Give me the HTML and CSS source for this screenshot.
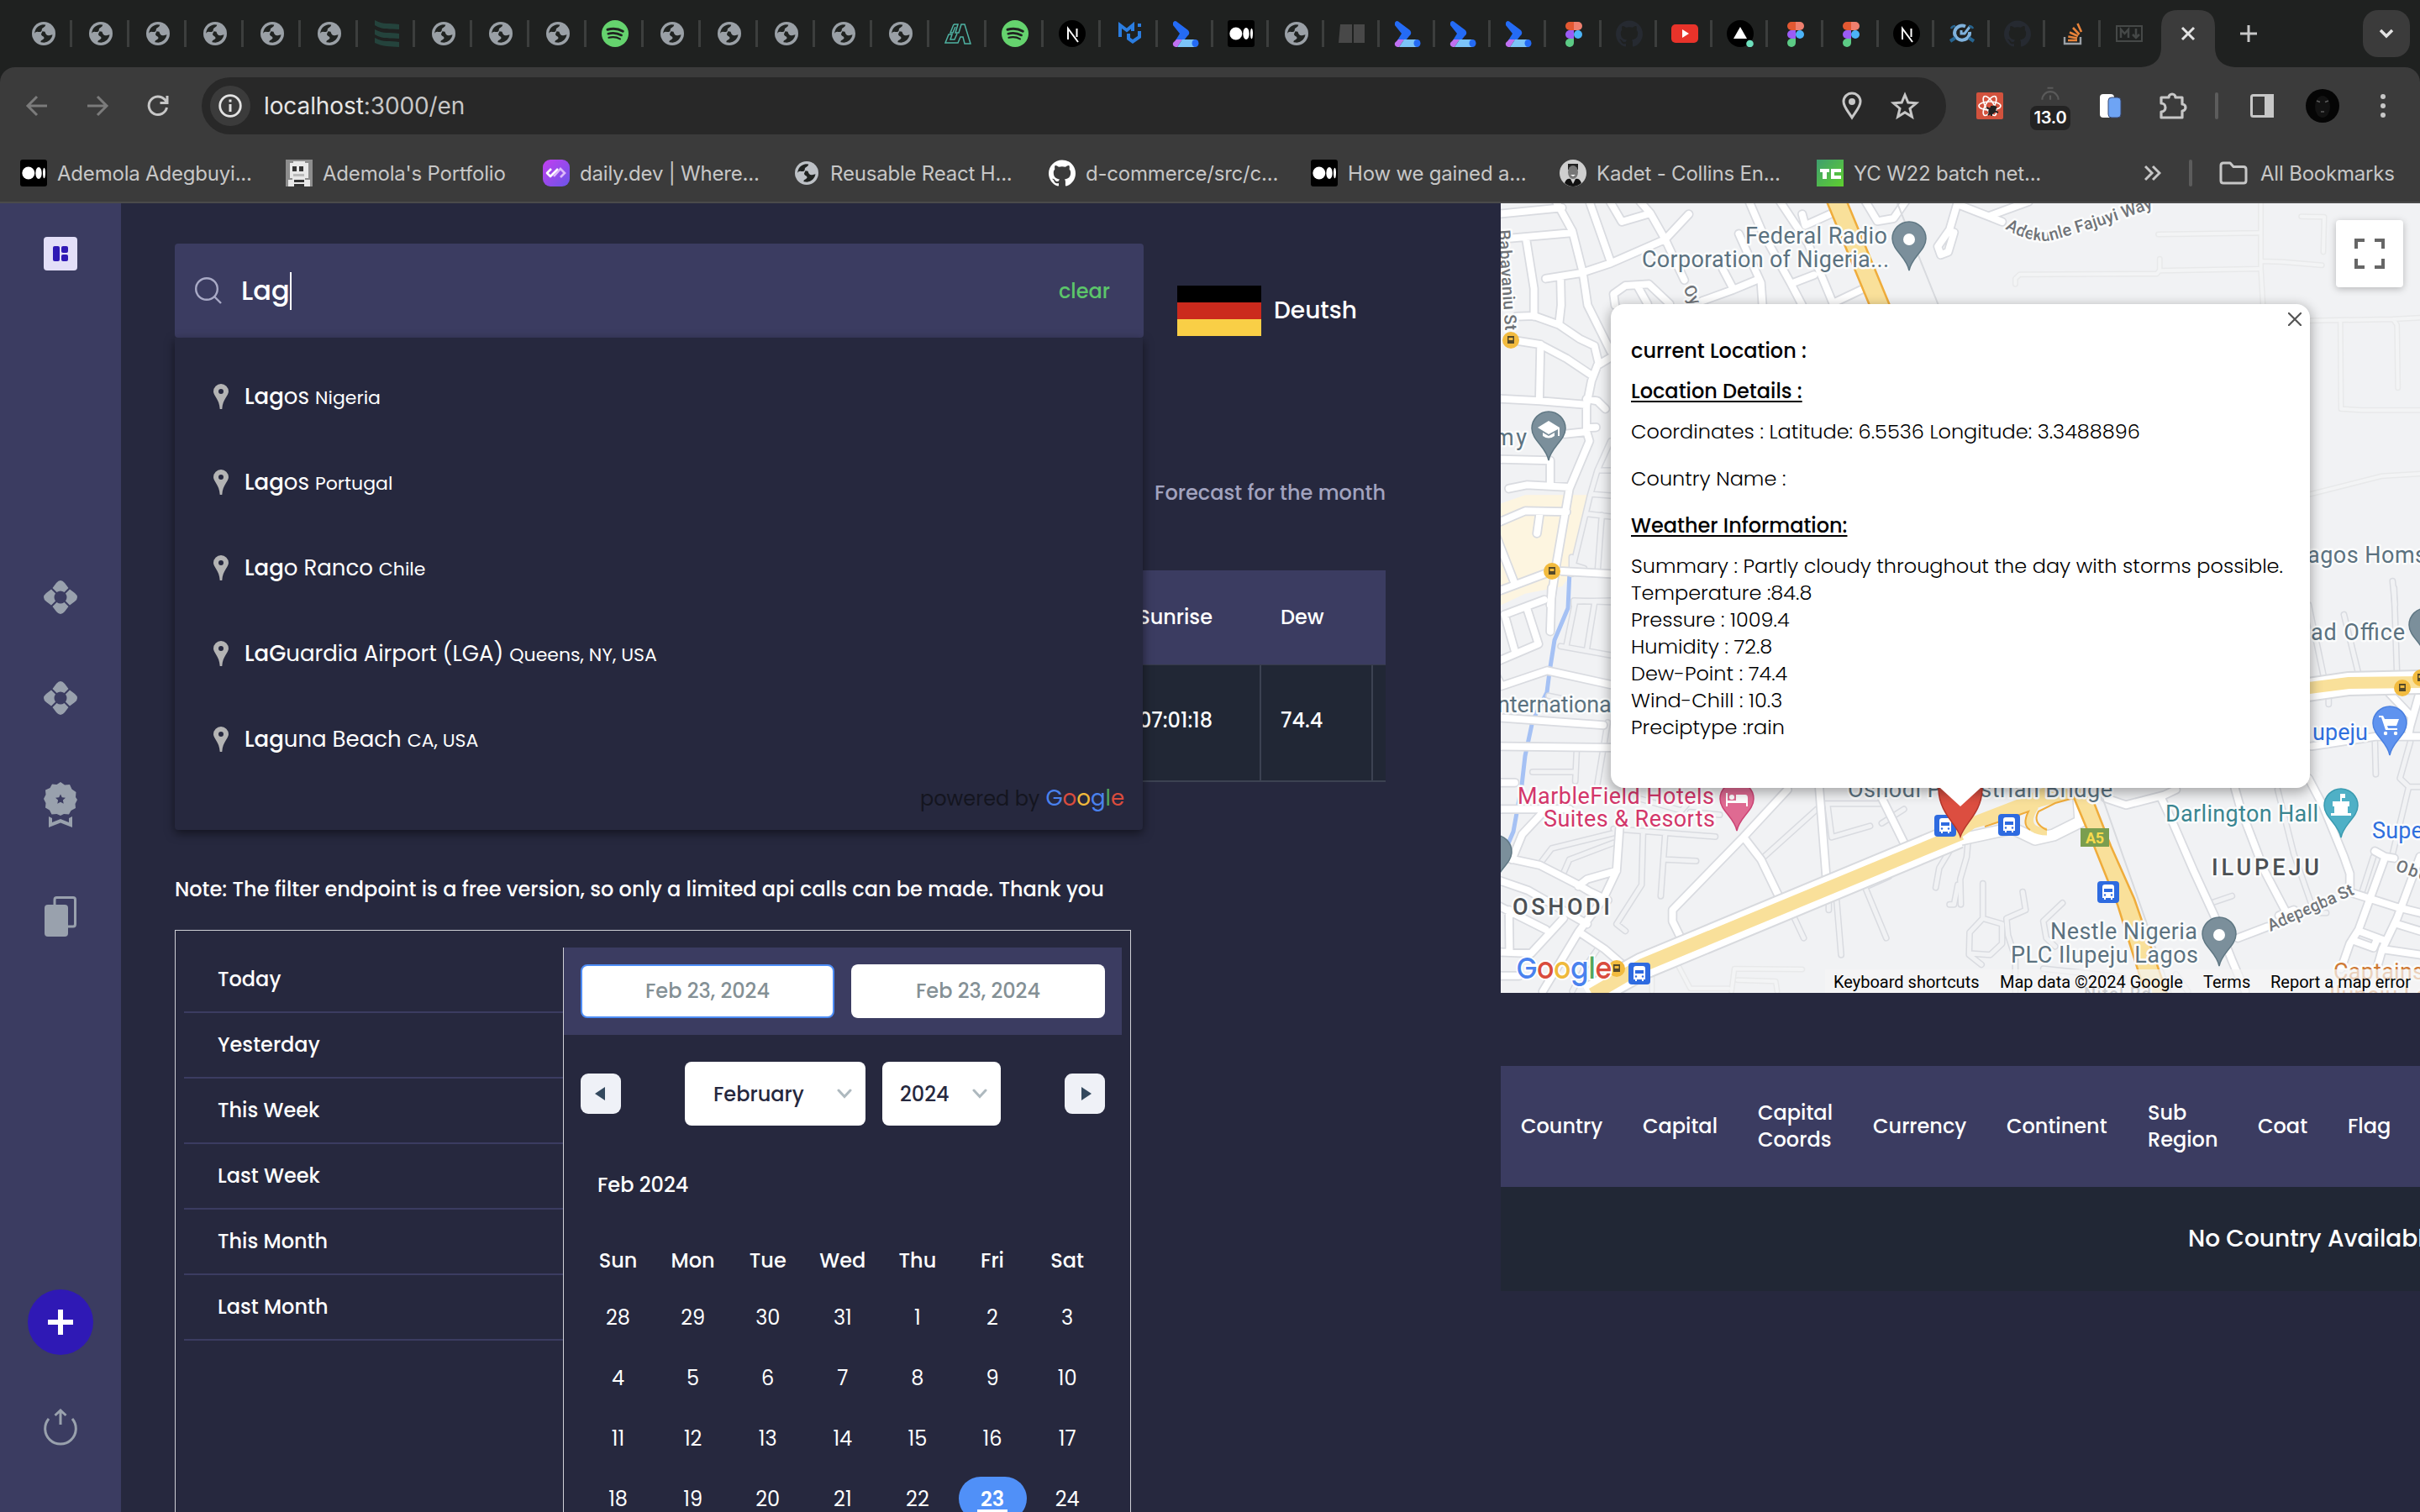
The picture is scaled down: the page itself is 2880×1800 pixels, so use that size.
FILE: index.html
```html
<!DOCTYPE html>
<html lang="en">
<head>
<meta charset="utf-8">
<title>Weather dashboard</title>
<link rel="stylesheet" href="styles.css">
</head>
<body>
<svg class="sprite" width="0" height="0">
  <symbol id="globe" viewBox="0 0 32 32"><circle cx="16" cy="16" r="14" fill="currentColor"/><path fill="#202321" d="M5.2 16C5.2 10.500 9.500 5.800 15 5.200L18.200 5.500C18 8.600 13.600 9 13.800 11.200C14 13.600 11.500 14.600 9.200 13.900C7.500 13.500 5.800 14.500 5.200 16ZM14.500 13.200L17.500 13.800C18.200 16.500 19.500 18.600 22.500 18.300L26.500 17.300C25.800 22.200 21.500 26.300 16.500 26.700L12.500 26.200C11.800 23.600 16.800 23.200 16.500 21C16.200 19 13 19 13 16.500Z"/></symbol>
  <symbol id="spotify" viewBox="0 0 32 32"><circle cx="16" cy="16" r="16" fill="#65d36e"/><g fill="none" stroke="#1f2120" stroke-linecap="round"><path stroke-width="3" d="M7 11.300C13 9.500 20 10.200 25.300 13.300"/><path stroke-width="2.600" d="M7.800 16.200C13 14.700 19 15.400 23.600 18"/><path stroke-width="2.200" d="M8.500 20.800C13 19.600 18 20.100 21.900 22.400"/></g></symbol>
  <symbol id="bars" viewBox="0 0 32 32"><path fill="#24433c" d="M2 0C12 6 20 3 31 5V11C20 10 12 12 2 6ZM2 11C12 17 20 14 31 16V22C20 21 12 23 2 17ZM2 21C12 27 20 24 31 26V32C20 31 12 32 2 27Z"/></symbol>
  <symbol id="amark" viewBox="0 0 32 32"><path fill="none" stroke="#4fb3a3" stroke-width="1.500" d="M11 5H16L13 15H17L20 5H24L31 28H24L22 20H19L16 27H1L5 17H9L7 23H12L15 16M11 5L7 15H10L13 8"/></symbol>
  <symbol id="next" viewBox="0 0 32 32"><circle cx="16" cy="16" r="16"/><path fill="none" stroke="#fff" stroke-width="2" d="M11 23V10L23 26M21.500 10V20"/></symbol>
  <symbol id="mui" viewBox="0 0 32 32"><path fill="none" stroke="#2b7de0" stroke-width="4" d="M5 20V6L13 12L20 6V13M15 16V22L20 25.500L28 20V13M28 4V8"/></symbol>
  <symbol id="bolt" viewBox="0 0 32 32"><path fill="#246bf5" d="M1 3Q3-1 7 3L19 12Q22 16 18 19L14 24H4L9 16L1 6Z"/><path fill="#c070f2" d="M5 23H12L6 32H4Q0 31 1 27Z"/><path fill="#7cc4f8" d="M12 23H28V32H6Z"/><ellipse cx="27.500" cy="27.500" rx="4" ry="4.500" fill="#246bf5"/></symbol>
  <symbol id="medium" viewBox="0 0 32 32"><rect width="32" height="32" rx="3"/><g fill="#fff"><circle cx="9.800" cy="16" r="7.500"/><ellipse cx="22" cy="16" rx="3.700" ry="7"/><ellipse cx="28.500" cy="16" rx="1.500" ry="6.300"/></g></symbol>
  <symbol id="books" viewBox="0 0 32 32"><path fill="#484848" d="M2 5H16V27H0ZM18 5H31V27H18Z"/></symbol>
  <symbol id="figma" viewBox="0 0 32 32"><path fill="#e25832" d="M16 2H11A5 5 0 0 0 11 12H16Z"/><path fill="#ee7f6e" d="M16 2H21A5 5 0 0 1 21 12H16Z"/><path fill="#9b5cf5" d="M16 12H11A5 5 0 0 0 11 22H16Z"/><circle cx="21" cy="17" r="5" fill="#4cb4f8"/><path fill="#5ccb85" d="M16 22H11A5 5 0 1 0 16 27Z"/></symbol>
  <symbol id="github" viewBox="0 0 24 24"><path fill="currentColor" d="M12 .297c-6.630 0-12 5.373-12 12 0 5.303 3.438 9.800 8.205 11.385.6.113.82-.258.82-.577 0-.285-.01-1.040-.015-2.040-3.338.724-4.042-1.610-4.042-1.610C4.422 18.070 3.633 17.700 3.633 17.700c-1.087-.744.084-.729.084-.729 1.205.084 1.838 1.236 1.838 1.236 1.070 1.835 2.809 1.305 3.495.998.108-.776.417-1.305.76-1.605-2.665-.3-5.466-1.332-5.466-5.930 0-1.310.465-2.380 1.235-3.220-.135-.303-.54-1.523.105-3.176 0 0 1.005-.322 3.300 1.230.96-.267 1.980-.399 3-.405 1.020.006 2.040.138 3 .405 2.280-1.552 3.285-1.230 3.285-1.230.645 1.653.24 2.873.12 3.176.765.84 1.230 1.910 1.230 3.220 0 4.610-2.805 5.625-5.475 5.920.42.36.81 1.096.81 2.220 0 1.606-.015 2.896-.015 3.286 0 .315.21.69.825.57C20.565 22.092 24 17.592 24 12.297c0-6.627-5.373-12-12-12"/></symbol>
  <symbol id="youtube" viewBox="0 0 32 32"><rect y="5" width="32" height="22" rx="5" fill="#e8332a"/><path fill="#fff" d="M13 11L21 16L13 21Z"/></symbol>
  <symbol id="vercel" viewBox="0 0 32 32"><circle cx="16" cy="16" r="16"/><path fill="#fff" d="M16 8L24 22H8Z"/><circle cx="27.500" cy="28" r="4.300" fill="#6ee0bd"/></symbol>
  <symbol id="clock" viewBox="0 0 32 32"><path fill="none" stroke="#7fb2dd" stroke-width="4" d="M20 7.500A9 8.500 0 1 0 25 14"/><path fill="none" stroke="#7fb2dd" stroke-width="3" d="M15 12V16H19L25 8"/><path fill="none" stroke="#27648f" stroke-width="4" d="M2 25L8 21M24 21L30 25"/><path fill="none" stroke="#27648f" stroke-width="2.500" d="M3 10Q4 7 8 7M24 7Q28 7 29 10"/></symbol>
  <symbol id="stack" viewBox="0 0 32 32"><path fill="none" stroke="#9aa0a6" stroke-width="2.400" d="M6 20V28H25V20"/><path fill="none" stroke="#e8833a" stroke-width="2.600" d="M10 24H21M10.300 19.500L21 21.500M12 14.500L22 19M16 9L23.500 17M21.500 4L26 14"/></symbol>
  <symbol id="mdn" viewBox="0 0 32 32"><rect x="1" y="7" width="30" height="18" fill="none" stroke="#454847" stroke-width="2"/><path fill="none" stroke="#454847" stroke-width="2.500" d="M6 21V11L10.500 16L15 11V21M24 10V20M20 17L24 21L28 17"/></symbol>
  <symbol id="life" viewBox="0 0 40 40"><path fill="#99a1ad" d="M10.500 9L15 3Q20-3 25 3L29.500 9L24.500 14Q20 11 15.500 14ZM31 10.500L37 15Q43 20 37 25L31 29.500L26 24.500Q29 20 26 15.500ZM29.500 31L25 37Q20 43 15 37L10.500 31L15.500 26Q20 29 24.500 26ZM9 29.500L3 25Q-3 20 3 15L9 10.500L14 15.500Q11 20 14 24.500Z"/></symbol>
  <symbol id="place" viewBox="0 0 18 30"><path fill="#b4b4b4" fill-rule="evenodd" d="M9 0A9 9 0 0 1 18 9C18 14 11 18 10.300 30H7.700C7 18 0 14 0 9A9 9 0 0 1 9 0ZM9 6A3 3 0 1 0 9 12A3 3 0 1 0 9 6Z"/></symbol>
</svg>

<header class="browser">
  <div class="tabs">
    <i class="tab"><svg><use href="#globe"/></svg></i><i class="tab"><svg><use href="#globe"/></svg></i><i class="tab"><svg><use href="#globe"/></svg></i><i class="tab"><svg><use href="#globe"/></svg></i><i class="tab"><svg><use href="#globe"/></svg></i><i class="tab"><svg><use href="#globe"/></svg></i>
    <i class="tab"><svg><use href="#bars"/></svg></i>
    <i class="tab"><svg><use href="#globe"/></svg></i><i class="tab"><svg><use href="#globe"/></svg></i><i class="tab"><svg><use href="#globe"/></svg></i>
    <i class="tab"><svg><use href="#spotify"/></svg></i>
    <i class="tab"><svg><use href="#globe"/></svg></i><i class="tab"><svg><use href="#globe"/></svg></i><i class="tab"><svg><use href="#globe"/></svg></i><i class="tab"><svg><use href="#globe"/></svg></i><i class="tab"><svg><use href="#globe"/></svg></i>
    <i class="tab"><svg><use href="#amark"/></svg></i>
    <i class="tab"><svg><use href="#spotify"/></svg></i>
    <i class="tab"><svg><use href="#next"/></svg></i>
    <i class="tab"><svg><use href="#mui"/></svg></i>
    <i class="tab slim"><svg><use href="#bolt"/></svg></i>
    <i class="tab slim"><svg><use href="#medium"/></svg></i>
    <i class="tab slim"><svg><use href="#globe"/></svg></i>
    <i class="tab slim"><svg><use href="#books"/></svg></i>
    <i class="tab slim"><svg><use href="#bolt"/></svg></i><i class="tab slim"><svg><use href="#bolt"/></svg></i><i class="tab slim"><svg><use href="#bolt"/></svg></i>
    <i class="tab slim"><svg><use href="#figma"/></svg></i>
    <i class="tab slim dim"><svg><use href="#github"/></svg></i>
    <i class="tab slim"><svg><use href="#youtube"/></svg></i>
    <i class="tab slim"><svg><use href="#vercel"/></svg></i>
    <i class="tab slim"><svg><use href="#figma"/></svg></i><i class="tab slim"><svg><use href="#figma"/></svg></i>
    <i class="tab slim"><svg><use href="#next"/></svg></i>
    <i class="tab slim"><svg><use href="#clock"/></svg></i>
    <i class="tab slim dim"><svg><use href="#github"/></svg></i>
    <i class="tab slim"><svg><use href="#stack"/></svg></i>
    <i class="tab slim last"><svg><use href="#mdn"/></svg></i>
    <svg class="active-tab" viewBox="0 0 112 68"><path fill="#3b3b3b" d="M0 68Q24 66 24 44V20Q24 0 44 0H68Q88 0 88 20V44Q88 66 112 68Z"/><path fill="none" stroke="#e3e3e3" stroke-width="3" d="M49 21L63 35M63 21L49 35"/></svg>
    <svg class="new-tab" viewBox="0 0 24 24"><path fill="none" stroke="#c7c7c7" stroke-width="3" d="M12 2V22M2 12H22"/></svg>
    <span class="tab-menu"><svg viewBox="0 0 20 20"><path fill="none" stroke="#e3e3e3" stroke-width="3.500" d="M3 6L10 13L17 6"/></svg></span>
  </div>

  <div class="toolbar">
    <svg class="nav-icon" viewBox="0 0 32 32"><path fill="none" stroke="#7b7b7b" stroke-width="3" d="M28 16H6M16 5L5 16L16 27"/></svg>
    <svg class="nav-icon" viewBox="0 0 32 32"><path fill="none" stroke="#7b7b7b" stroke-width="3" d="M4 16H26M16 5L27 16L16 27"/></svg>
    <svg class="nav-icon" viewBox="0 0 32 32"><path fill="none" stroke="#c7c7c7" stroke-width="3" d="M26.500 18A10.800 10.800 0 1 1 24 8.500L27 12M27 4V12.500H18.500"/></svg>
    <div class="omnibox">
      <span class="site-info"><svg viewBox="0 0 28 28"><circle cx="14" cy="14" r="12.300" fill="none" stroke="#e3e3e3" stroke-width="2.800"/><path stroke="#e3e3e3" stroke-width="3" d="M14 12V21M14 6.500V9.500"/></svg></span>
      <span class="url"><b>localhost</b>:3000/en</span>
      <svg class="loc" viewBox="0 0 24 34"><path fill="none" stroke="#c7c7c7" stroke-width="3" d="M12 31C7 23 2 18 2 12A10 10 0 0 1 22 12C22 18 17 23 12 31Z"/><circle cx="12" cy="12" r="4" fill="#c7c7c7"/></svg>
      <svg class="star" viewBox="0 0 34 34"><path fill="none" stroke="#c7c7c7" stroke-width="3" stroke-linejoin="miter" d="M17 4L20.800 13L30.500 13.800L23 20.200L25.400 30L17 24.700L8.600 30L11 20.200L3.500 13.800L13.200 13Z"/></svg>
    </div>
    <div class="extensions">
      <svg class="ext-react" viewBox="0 0 32 32"><rect width="32" height="32" rx="2" fill="#d2523d"/><g fill="none" stroke="#fff" stroke-width="1.600"><ellipse cx="16" cy="16" rx="13" ry="5"/><ellipse cx="16" cy="16" rx="13" ry="5" transform="rotate(60 16 16)"/><ellipse cx="16" cy="16" rx="13" ry="5" transform="rotate(120 16 16)"/></g><path stroke="#222" stroke-width="2" d="M12 18L26 24M14 27L24 17M18 16V28"/><ellipse cx="19" cy="21" rx="4" ry="6" fill="#222" transform="rotate(35 19 21)"/></svg>
      <span class="timer"><svg viewBox="0 0 32 32"><path fill="none" stroke="#5a5a5a" stroke-width="2.500" d="M5 18A11 11 0 0 1 27 18M12 2H20M16 12V18"/></svg><em>13.0</em></span>
      <svg class="ext-docs" viewBox="0 0 28 32"><rect x="2" y="2" width="17" height="28" rx="4" fill="#fff"/><rect x="12" y="6" width="15" height="24" rx="4" fill="#6ea4f4" stroke="#3b4a73" stroke-width="1"/></svg>
      <svg class="ext-puzzle" viewBox="0 0 34 34"><path fill="none" stroke="#c7c7c7" stroke-width="3.200" stroke-linejoin="round" d="M3 7H12A4 4 0 0 1 20 7H28V15A4 4 0 0 1 28 23V31H3V24A5 5 0 0 0 3 14Z"/></svg>
      <span class="bar"></span>
      <svg class="ext-panel" viewBox="0 0 28 28"><rect x="1.500" y="1.500" width="25" height="25" rx="2" fill="none" stroke="#c7c7c7" stroke-width="3"/><path fill="#c7c7c7" d="M17 0H28V28H17Z"/></svg>
      <svg class="avatar" viewBox="0 0 40 40"><circle cx="20" cy="20" r="20" fill="#050505"/><ellipse cx="20" cy="21" rx="9" ry="13" fill="#121212"/><path stroke="#5a5a5a" stroke-width="1.500" d="M13 14L17 15.500M23 15.500L27 14M18 27H22"/></svg>
      <svg class="dots" viewBox="0 0 8 28"><g fill="#c7c7c7"><circle cx="4" cy="3" r="3"/><circle cx="4" cy="14" r="3"/><circle cx="4" cy="25" r="3"/></g></svg>
    </div>
  </div>

  <div class="bookmarks">
    <span class="bm w1"><svg><use href="#medium"/></svg>Ademola Adegbuyi...</span>
    <span class="bm w2"><svg viewBox="0 0 32 32"><rect width="32" height="32" fill="#8d8d8d"/><path fill="#e8e8e8" d="M5 4H9V2H23V4H27V22H23V24H29V32H3V24H8V22H5Z"/><path fill="#333" d="M8 8H13V14H8ZM16 8H21V14H16ZM10 24H22V27H10ZM10 29H22V32H10Z"/><path fill="#bbb" d="M9 17H22V20H9Z"/></svg>Ademola's Portfolio</span>
    <span class="bm w3"><svg viewBox="0 0 32 32"><defs><linearGradient id="dd" x1="0" y1="0" x2="1" y2="1"><stop offset="0" stop-color="#c33ff0"/><stop offset="1" stop-color="#6a55e8"/></linearGradient></defs><rect width="32" height="32" rx="9" fill="url(#dd)"/><path fill="none" stroke="#fff" stroke-width="2.600" stroke-linejoin="round" d="M10 11L5 16L9 20L18 11"/><path fill="none" stroke="#dcb9fa" stroke-width="2.600" d="M13 20L21 11L26 16L21 21"/></svg>daily.dev | Where...</span>
    <span class="bm w4 light"><svg><use href="#globe"/></svg>Reusable React H...</span>
    <span class="bm w5 white"><svg><use href="#github"/></svg>d-commerce/src/c...</span>
    <span class="bm w6"><svg><use href="#medium"/></svg>How we gained a...</span>
    <span class="bm w7"><svg viewBox="0 0 32 32"><circle cx="16" cy="16" r="16" fill="#cfcfcf"/><path fill="#222" d="M10 5H22V12H10Z"/><ellipse cx="16" cy="15" rx="6" ry="8" fill="#777"/><path fill="#fff" d="M13 18H19L16 20Z"/><path fill="#111" d="M6 28Q8 22 13 23L16 29L19 23Q24 22 26 28Q16 36 6 28Z"/></svg>Kadet - Collins En...</span>
    <span class="bm w8"><svg viewBox="0 0 32 32"><defs><linearGradient id="tc" x1="0" y1="0" x2="1" y2="1"><stop offset="0" stop-color="#3f9e6f"/><stop offset="1" stop-color="#5fd02e"/></linearGradient></defs><rect width="32" height="32" fill="url(#tc)"/><path fill="#fff" d="M4 11H15V15H12V23H7V15H4ZM17 11H29V15H21V19H29V23H17Z"/></svg>YC W22 batch net...</span>
    <span class="more"><svg viewBox="0 0 20 20"><path fill="none" stroke="#c7c7c7" stroke-width="3" d="M1 2L9 10L1 18M10 2L18 10L10 18"/></svg></span>
    <span class="bar"></span>
    <span class="bm all"><svg viewBox="0 0 34 28"><path fill="none" stroke="#c7c7c7" stroke-width="3" stroke-linejoin="round" d="M2 5Q2 2 5 2H13L17 6.500H29Q32 6.500 32 9.500V23Q32 26 29 26H5Q2 26 2 23Z"/></svg>All Bookmarks</span>
  </div>
</header>

<div class="app">
  <nav class="sidebar">
    <svg class="logo" viewBox="0 0 40 40"><rect width="40" height="40" rx="4" fill="#e3dff8"/><g fill="#2f19b5"><rect x="11" y="11" width="8" height="18" rx="2"/><rect x="21" y="11" width="8" height="8" rx="2"/><rect x="21" y="21" width="8" height="8" rx="2"/></g></svg>
    <svg class="s-life" width="40" height="40"><use href="#life"/></svg>
    <svg class="s-life2" width="40" height="40"><use href="#life"/></svg>
    <svg class="s-award" viewBox="0 0 40 54"><path fill="#99a1ad" d="M20 0L25 3.500L31 3L33.500 8.500L38.500 12L38 18L40 21L37.500 26L38 31L32.500 34L30 38.500L24 38L20 40L15.500 38L9.500 38.500L7 33.500L2 30.500L2.500 25L0 20L2.500 15L2 9.500L7.500 7L10 2.500L15.500 3Z"/><path fill="#3b3c61" d="M20 14.500L21.800 18.300L26 18.800L22.900 21.600L23.700 25.700L20 23.700L16.300 25.700L17.100 21.600L14 18.800L18.200 18.300Z"/><path fill="#99a1ad" d="M6 41L10 43V48L20 44L30 48V43L34 41V54L20 48.500L6 54Z"/></svg>
    <svg class="s-copy" viewBox="0 0 38 48"><path fill="none" stroke="#99a1ad" stroke-width="3" d="M12 10V4Q12 1.500 14.500 1.500H34Q36.500 1.500 36.500 4V33Q36.500 36 34 36H28"/><rect y="10" width="28" height="38" rx="4" fill="#99a1ad"/></svg>
    <svg class="s-plus" viewBox="0 0 78 78"><circle cx="39" cy="39" r="39" fill="#2f19b5"/><path stroke="#fff" stroke-width="6" d="M39 24V54M24 39H54"/></svg>
    <svg class="s-power" viewBox="0 0 40 44"><path fill="none" stroke="#99a1ad" stroke-width="3" d="M6 12A18.300 18.300 0 1 0 34 12M20 19V3M13.500 8L20 2L26.500 8"/></svg>
  </nav>

  <main class="main">
    <div class="top-row">
      <div class="search">
        <svg class="lens" viewBox="0 0 32 32"><circle cx="14" cy="14" r="12.800" fill="none" stroke="#a9aac6" stroke-width="2.400"/><path stroke="#a9aac6" stroke-width="2.400" d="M23 23L31 31"/></svg>
        <span class="query">Lag</span><span class="caret"></span>
        <span class="clear">clear</span>
        <ul class="suggest">
          <li><svg><use href="#place"/></svg><b><strong>Lag</strong>os</b> <small>Nigeria</small></li>
          <li><svg><use href="#place"/></svg><b><strong>Lag</strong>os</b> <small>Portugal</small></li>
          <li><svg><use href="#place"/></svg><b><strong>Lag</strong>o Ranco</b> <small>Chile</small></li>
          <li><svg><use href="#place"/></svg><b><strong>LaG</strong>uardia Airport (LGA)</b> <small>Queens, NY, USA</small></li>
          <li><svg><use href="#place"/></svg><b><strong>Lag</strong>una Beach</b> <small>CA, USA</small></li>
          <li class="powered">powered by <span class="google"><i>G</i><i>o</i><i>o</i><i>g</i><i>l</i><i>e</i></span></li>
        </ul>
      </div>
      <div class="language"><span class="flag"><i></i><i></i><i></i></span>Deutsh</div>
    </div>

    <p class="forecast">Forecast for the month</p>
    <div class="weather">
      <div class="row head"><span></span><span>Sunrise</span><span>Dew</span><span></span></div>
      <div class="row body"><span></span><span>07:01:18</span><span>74.4</span><span></span></div>
    </div>

    <p class="note">Note: The filter endpoint is a free version, so only a limited api calls can be made. Thank you</p>

    <section class="range">
      <ul class="presets"><li>Today</li><li>Yesterday</li><li>This Week</li><li>Last Week</li><li>This Month</li><li>Last Month</li></ul>
      <div class="calendar">
        <div class="dates"><span class="on">Feb 23, 2024</span><span>Feb 23, 2024</span></div>
        <div class="pager">
          <span class="btn prev"><svg viewBox="0 0 12 16"><path fill="#34495e" d="M12 0V16L0 8Z"/></svg></span>
          <div class="selects">
            <span class="select month">February<svg viewBox="0 0 18 12"><path fill="none" stroke="#aeb9bf" stroke-width="3" stroke-linecap="round" d="M2 2L9 9.500L16 2"/></svg></span>
            <span class="select year">2024<svg viewBox="0 0 18 12"><path fill="none" stroke="#aeb9bf" stroke-width="3" stroke-linecap="round" d="M2 2L9 9.500L16 2"/></svg></span>
          </div>
          <span class="btn next"><svg viewBox="0 0 12 16"><path fill="#34495e" d="M0 0V16L12 8Z"/></svg></span>
        </div>
        <p class="month-name">Feb 2024</p>
        <div class="week"><b>Sun</b><b>Mon</b><b>Tue</b><b>Wed</b><b>Thu</b><b>Fri</b><b>Sat</b></div>
        <div class="days">
          <span>28</span><span>29</span><span>30</span><span>31</span><span>1</span><span>2</span><span>3</span>
          <span>4</span><span>5</span><span>6</span><span>7</span><span>8</span><span>9</span><span>10</span>
          <span>11</span><span>12</span><span>13</span><span>14</span><span>15</span><span>16</span><span>17</span>
          <span>18</span><span>19</span><span>20</span><span>21</span><span>22</span><span class="today">23</span><span>24</span>
        </div>
      </div>
    </section>
  </main>

  <aside class="side">
    <div class="map">
      <svg class="tiles" viewBox="1786 242 1094 940" width="1094" height="940">
        <defs>
          <g id="minor">
            <g transform="translate(1780 240) scale(.35077 .33333)">
              <path d="M390 855L345 960L320 1050L265 1290M350 960H390M325 1045L390 1050M310 1115L390 1125M360 1120L345 1330M258 1270V1330M270 1300L300 1310M265 1440V1425L390 1430"/>
            </g>
            <g transform="translate(1780 700) scale(.35077 .33333)">
              <path d="M390 45L270 48L240 205M335 55L310 215M220 208L390 240M275 575L270 690M125 657H270M380 480L345 700M180 385L250 400M400 910L250 970L225 1030M500 870L495 1060L410 1200L440 1225M400 860L745 888M420 870L190 930L150 985M575 880L560 1100M580 970L680 975M1115 770H1310M1090 790L900 970M1125 770L1140 890L1270 850M1310 840L1385 790M1005 1160L1045 1250M1130 1110V1150M1155 1095L1172 1310M1250 1060L1325 1250M1260 1065L1335 1030M1545 930L1505 1000L1493 1070M1568 1060L1555 1130H1540M480 750L630 795L660 760M660 800L760 810M345 1290L300 1360L260 1440"/>
            </g>
            <g transform="translate(2330 240) scale(.35077 .33333)"><path d="M1475 1355L1483 1440"/></g>
            <g transform="translate(2330 700) scale(.35077 .33333)">
              <path d="M1190 60L1240 310M1310 95L1360 310M1480 0L1490 310M1258 380V415M1085 720L1140 950L1210 1160L1250 1160M35 900L30 960L8 1040L10 1130M85 1055V1180L40 1230L38 1310L80 1345M85 1180L150 1200V1270L110 1310L40 1305M220 1085L230 1150L165 1180L170 1240L195 1320V1440M355 1125L290 1190L300 1250L330 1280M860 1125L930 1100M1415 545L1418 665M1535 550L1500 680L1530 710L1475 950M1530 710H1568M1410 960L1370 1090M290 1360L560 1390M740 1380L780 1440"/>
            </g>
          </g>
          <g id="faint">
            <g transform="translate(2330 240) scale(.35077 .33333)">
              <path d="M680 117L1020 112M1028 0V240L1035 365M195 295V275L210 260L675 258L685 245V205M685 247L1020 240M1030 213L1100 215L1235 227M1165 53L1243 55L1240 180M1195 425L1475 420L1568 415M1298 430L1300 740L1370 745H1568M1480 425L1490 440L1493 665M1195 1045L1440 980L1568 972"/>
            </g>
            <g transform="translate(1780 700) scale(.35077 .33333)"><path d="M615 1340L660 1430H790M800 1440L810 1360L1040 1362M820 1400L950 1405L955 1440M530 1370V1440"/></g>
          </g>
          <g id="streets">
            <g transform="translate(1780 240) scale(.35077 .33333)">
              <path d="M0 45L225 22M205 0L260 105L295 250L312 370L390 535M30 133L255 112M104 140L130 310V410M170 275L290 255L390 220L575 135L655 45M318 0L390 215M388 0L428 72L525 42L490 0M525 42L575 135L640 280M220 275L222 370L215 435M70 410L130 408L215 440L285 490L335 515L350 580M60 495L150 510L240 560L325 620M152 510L148 710M0 703L150 712L305 725M400 550L345 585L325 640L308 730V820L318 855L250 1025L205 1300L185 1440M235 830L308 822M308 705L345 712L372 740M308 808L340 806M0 920L185 925V1015M45 1025L105 1012L250 1020M0 1150L100 1105L240 1108M150 1110L140 1185M0 1190L65 1365M0 1395L190 1320M225 1320L390 1330M860 0L905 110L1000 290L1040 370M825 115L900 290L905 365M770 240L805 310M700 355L805 315L885 280M1060 150L1145 365M965 0L1060 150M1010 290L1080 262M1040 45L1050 85L1145 40M1150 360L1240 315M1255 0L1295 70L1350 60L1390 0M1568 0L1540 100L1500 160L1510 190L1535 180L1555 110M405 370L400 330L440 300L520 295L590 365M480 300L515 365"/>
            </g>
            <g transform="translate(2330 240) scale(.35077 .33333)"><path d="M0 10L110 55L150 72M110 50L240 0M0 5V-10"/></g>
            <g transform="translate(1780 700) scale(.35077 .33333)">
              <path d="M0 265L145 200L105 70M30 95L65 225M30 95L165 42M190 0L185 155M0 310L20 350L175 295L390 345M0 462L365 490M0 565L390 570M17 695H65M0 790H250M170 790L90 880L55 970M40 965L150 990L280 1060L320 1085L380 1115M420 860L410 1010L365 1110L280 1230L160 1440M410 1010L310 1040L280 1065M0 1040L110 1080L310 1200M0 1130L170 1220M45 1150L47 1300M0 1300L120 1305L230 1180M285 1230L370 1290L430 1345M17 1385H80M990 720L840 890L600 1150V1190L635 1265M845 895L900 970L960 1100M1098 715L1122 1040M1310 750L1390 920"/>
            </g>
            <g transform="translate(2330 700) scale(.35077 .33333)">
              <path d="M500 750L570 775L700 740L740 720M690 750L730 840L800 1010L870 1170L930 1330L975 1440M940 715L960 790L1040 1010L1110 1150M1190 680L1240 780L1310 960L1330 1020V1075M1340 1090L1490 1140L1568 1160M950 1250L1050 1210M1090 1170L1140 1150M1450 960L1360 1220L1330 1270L1300 1360M1568 960L1490 1180L1440 1290L1400 1440M1360 1225L1450 1260M1490 1200L1568 1225M1440 1290L1568 1310M1345 1260L1410 1285L1420 1260M1415 940L1450 960L1480 965M1450 360L1540 460L1530 520M1568 370L1530 510M1200 565L1420 530H1568"/>
            </g>
          </g>
        </defs>
        <rect x="1786" y="242" width="1094" height="940" fill="#f1f2f4"/>
        <g transform="translate(1780 240) scale(.35077 .33333)">
          <path fill="#fdf5e0" d="M0 1085L100 1048H310L250 1340L225 1375L100 1400L0 1450Z"/>
        </g>
        <path class="water" d="M1868 680L1866 724L1850 762L1844 800L1841 824L1824 858L1815 900L1811 935L1801 990L1795 1004"/>
        <use class="casing faint" href="#faint"/><use class="fill faint" href="#faint"/>
        <use class="casing" href="#minor"/><use class="fill grey" href="#minor"/>
        <use class="casing big" href="#streets"/><use class="fill big" href="#streets"/>
        <g fill="none">
          <path stroke="#d8dade" stroke-width="34" d="M1890 1186L1955 1150L2330 994"/>
          <path stroke="#d8dade" stroke-width="16" stroke-linejoin="round" d="M2330 1000L2395 986L2422 999L2444 994L2476 978L2474 950"/>
          <path stroke="#fff" stroke-width="30" d="M1890 1186L1955 1150L2330 994"/>
          <path stroke="#fff" stroke-width="13" stroke-linejoin="round" d="M2330 1000L2395 986L2422 999L2444 994L2476 978L2474 950"/>
          <path stroke="#f9e09a" stroke-width="16" d="M1895 1184L1955 1149L2334 992"/>
        </g>
        <path fill="#f9e09a" d="M2330 992L2338 976L2400 952L2440 934H2480L2470 950L2430 960L2392 974L2350 986L2333 998Z"/>
        <path fill="none" stroke="#f9e09a" stroke-width="9" d="M2422 960Q2410 978 2420 986Q2426 990 2436 990"/>
        <path fill="none" stroke="#efac3b" stroke-width="2" d="M2362 984L2392 974L2414 966Q2406 982 2416 988M2436 988Q2418 980 2426 966L2446 956L2468 950"/>
        <path stroke="#d8dade" stroke-width="2" fill="none" d="M2258 242L2308 366M2498 938L2584 1182"/>
        <path fill="#f9e09a" stroke="#efac3b" stroke-width="2.500" d="M2174 240H2198L2250 366H2226ZM2462 935H2484L2512 1007L2540 1070L2580 1186H2554L2520 1077L2492 1007Z"/>
        <g fill="none"><path stroke="#d8dade" stroke-width="30" d="M2740 822L2795 814L2880 812"/><path stroke="#fff" stroke-width="26" d="M2740 822L2795 814L2880 812"/><path stroke="#f9e09a" stroke-width="14" d="M2740 820L2795 813L2880 812"/></g>

        <defs>
          <path id="pinShape" d="M0 0C-3-16-20-24-20-38A20 20 0 0 1 20-38C20-24 3-16 0 0Z"/>
          <g id="stop"><circle r="10" fill="#f2bb3f"/><path fill="#54492a" d="M-4-5H4V4H-4Z"/><path fill="#f2bb3f" d="M-2.500-3H2.500V0H-2.500Z"/></g>
          <g id="bus"><rect x="-13" y="-13" width="26" height="26" rx="4" fill="#2e6be0"/><path fill="#fff" d="M-7-6Q-7-9-4-9H4Q7-9 7-6V7H5V9H3V7H-3V9H-5V7H-7Z"/><path fill="#2e6be0" d="M-5-4H5V0H-5Z"/><circle cx="-4" cy="3.500" r="1.200" fill="#2e6be0"/><circle cx="4" cy="3.500" r="1.200" fill="#2e6be0"/></g>
          <path id="fajuyi" d="M2386 272Q2416 290 2442 286Q2500 270 2572 244"/>
          <linearGradient id="shade" x1="0" y1="0" x2="0" y2="1"><stop offset="0" stop-color="#b8493e"/><stop offset=".5" stop-color="#dc4e40"/></linearGradient>
        </defs>
        <g fill="#7b8f9b" stroke="#5f7783" stroke-width="1.500">
          <use href="#pinShape" x="2272" y="322"/><use href="#pinShape" x="1843" y="548"/><use href="#pinShape" x="1779" y="1052"/><use href="#pinShape" x="2887" y="782"/><use href="#pinShape" x="2641" y="1150"/>
          <use href="#pinShape" x="2067" y="989" fill="#df6a92" stroke="#cc4374"/>
          <use href="#pinShape" x="2844" y="899" fill="#5f93ef" stroke="#4a80e0"/>
          <use href="#pinShape" x="2786" y="997" fill="#4fb0c6" stroke="#3a9bb0"/>
        </g>
        <g fill="#fff"><circle cx="2272" cy="285" r="7"/><circle cx="2641" cy="1113" r="7"/>
          <path d="M1830 509L1843 501L1856 509V519H1854V511L1843 517ZM1836 515L1843 519L1850 515V519Q1843 524 1836 519Z"/>
          <path d="M2054 944H2056V953H2066V946H2077Q2080 946 2080 950V960H2078V956H2056V960H2054Z"/><circle cx="2061" cy="949" r="3"/>
          <path d="M2831 852H2836L2838 856H2855L2852 864H2841L2842 867H2853V869H2839L2834 854H2831Z"/><circle cx="2839" cy="873" r="2.200"/><circle cx="2851" cy="873" r="2.200"/>
          <path d="M2785 945H2791V950H2787V954H2796V960H2794V968H2798V971H2774V968H2778V960H2776V954H2785Z"/>
        </g>
        <use href="#stop" x="1798" y="405"/><use href="#stop" x="1847" y="680"/><use href="#stop" x="2859" y="819"/><use href="#stop" x="2881" y="807"/>
        <use href="#bus" x="2391" y="982"/><use href="#bus" x="2509" y="1062"/><use href="#bus" x="1951" y="1159"/><use href="#bus" x="2315" y="983"/>
        <rect x="2476" y="986" width="34" height="22" fill="#7a9e4f"/><text x="2482" y="1004" class="shield" textLength="22">A5</text>

        <g class="labels">
          <text x="2077" y="290" textLength="169">Federal Radio</text>
          <text x="1954" y="318" textLength="294">Corporation of Nigeria...</text>
          <text x="1778" y="530" textLength="39">my</text>
          <text x="1782" y="848" textLength="142">nternational</text>
          <text x="2199" y="949" textLength="315">Oshodi Pedestrian Bridge</text>
          <text x="2746" y="670" textLength="142">agos Homs</text>
          <text x="2750" y="762" textLength="112">ad Office</text>
          <text x="2440" y="1118" textLength="175">Nestle Nigeria</text>
          <text x="2393" y="1146" textLength="223">PLC Ilupeju Lagos</text>
          <g fill="#d3366a"><text x="1806" y="957" textLength="234">MarbleField Hotels</text><text x="1837" y="984" textLength="204">Suites &amp; Resorts</text></g>
          <g fill="#2f6fde"><text x="2752" y="881" textLength="66">upeju</text><text x="2823" y="998" textLength="70">Super</text></g>
          <g fill="#3a8590"><text x="2577" y="978" textLength="182">Darlington Hall</text></g>
          <g fill="#cf7a35"><text x="2777" y="1166" textLength="108">Captains</text><text x="2772" y="1194" textLength="118">Ilupeju La</text></g>
          <g fill="#4c5054" font-weight="500"><text x="1800" y="1089" textLength="116">OSHODI</text><text x="2632" y="1042" textLength="128">ILUPEJU</text></g>
          <g class="street">
            <text transform="translate(1783 274) rotate(86)" textLength="120">Babavaniu St</text>
            <text transform="translate(2003 343) rotate(66)" textLength="60">Oyewo</text>
            <text transform="translate(2702 1109) rotate(-24)" textLength="110">Adepegba St</text>
            <text transform="translate(2850 1036) rotate(20)" textLength="40">Obo</text>
            <text transform="translate(2480 1190)" textLength="80">Nitel Rd</text>
            <text><textPath href="#fajuyi" textLength="186">Adekunle Fajuyi Way</textPath></text>
          </g>
        </g>
        <use href="#stop" x="1924" y="1153"/>
        <g class="g-logo"><text x="1805" y="1165" textLength="113" lengthAdjust="spacingAndGlyphs"><tspan fill="#4a82ee">G</tspan><tspan fill="#d94c3d">o</tspan><tspan fill="#efb93b">o</tspan><tspan fill="#4a82ee">g</tspan><tspan fill="#52a65c">l</tspan><tspan fill="#d94c3d">e</tspan></text></g>
        <path fill="url(#shade)" stroke="#b5362b" stroke-width="1.500" d="M2333 996C2328 980 2308 968 2307 940A26 26 0 0 1 2359 940C2358 968 2338 980 2333 996Z"/>
      </svg>
      <span class="fullscreen"><svg viewBox="0 0 36 36"><path fill="none" stroke="#666" stroke-width="4" d="M2 12V2H12M24 2H34V12M34 24V34H24M12 34H2V24"/></svg></span>
      <div class="legal"><span class="k1">Keyboard shortcuts</span><span class="k2">Map data ©2024 Google</span><span class="k3">Terms</span><span class="k4">Report a map error</span></div>
      <div class="popup">
        <svg class="close" viewBox="0 0 16 16"><path stroke="#555" stroke-width="2.200" d="M0 0L16 16M16 0L0 16"/></svg>
        <h4>current Location :</h4>
        <h4 class="u loc-d">Location Details :</h4>
        <p class="coords">Coordinates : Latitude: 6.5536 Longitude: 3.3488896</p>
        <p class="country">Country Name :</p>
        <h4 class="u weather-i">Weather Information:</h4>
        <p class="summary">Summary : Partly cloudy throughout the day with storms possible.</p>
        <p>Temperature :84.8<br>Pressure : 1009.4<br>Humidity : 72.8<br>Dew-Point : 74.4<br>Wind-Chill : 10.3<br>Preciptype :rain</p>
      </div>
    </div>

    <div class="countries">
      <div class="c-head"><span>Country</span><span>Capital</span><span>Capital Coords</span><span>Currency</span><span>Continent</span><span>Sub Region</span><span>Coat</span><span>Flag</span></div>
      <div class="c-empty">No Country Available</div>
    </div>
  </aside>
</div>
</body>
</html>
```
FILE: styles.css
```css
* { box-sizing: border-box; margin: 0; padding: 0; }
html, body { width: 2880px; height: 1800px; overflow: hidden; }
body { display: flex; flex-direction: column; background: #26283e; color: #fff; font-family: Poppins, Inter, "Open Sans", sans-serif; font-size: 24px; }
i, em { font-style: normal; }
ul { list-style: none; }
svg { display: block; flex: none; }
.sprite { position: absolute; }

/* browser chrome */
.browser { height: 242px; flex: none; background: linear-gradient(#1f2120 110px, #3b3b3b 110px); border-bottom: 2px solid #4a4a4a; font-family: Inter, sans-serif; letter-spacing: -.2px; color: #c7c7c7; }
.tabs { height: 80px; display: flex; align-items: center; padding-left: 18px; }
.tab { width: 68px; height: 32px; display: flex; justify-content: center; border-right: 3px solid #3c3e3d; padding-left: 3px; color: #9aa0a6; flex: none; }
.tab svg { width: 32px; height: 32px; }
.tab.slim { width: 66px; }
.tab.dim { color: #262a31; }
.tab.last { border: 0; width: 64px; margin-right: -16px; }
.active-tab { width: 112px; height: 68px; align-self: flex-end; }
.new-tab { width: 24px; height: 24px; margin-left: 4px; }
.tab-menu { width: 56px; height: 56px; border-radius: 18px; background: #3b3b3b; margin-left: auto; margin-right: 12px; display: flex; align-items: center; justify-content: center; }
.tab-menu svg { width: 20px; height: 20px; }
.toolbar { height: 92px; display: flex; align-items: center; padding-left: 28px; gap: 40px; background: #3b3b3b; border-radius: 18px 18px 0 0; }
.nav-icon { width: 32px; height: 32px; }
.omnibox { width: 2076px; height: 68px; margin-left: -4px; border-radius: 34px; background: #282828; display: flex; align-items: center; padding: 0 32px 0 10px; }
.site-info { width: 48px; height: 48px; border-radius: 50%; background: #3b3b3b; display: flex; align-items: center; justify-content: center; }
.site-info svg { width: 28px; height: 28px; }
.url { margin-left: 16px; font-size: 28px; letter-spacing: -.1px; color: #c7c7c7; }
.url b { font-weight: 400; color: #e6e6e6; }
.loc { width: 24px; height: 34px; margin-left: auto; }
.star { width: 34px; height: 34px; margin-left: 34px; }
.extensions { display: flex; align-items: center; margin-left: -4px; }
.ext-react { width: 32px; height: 32px; }
.timer { width: 48px; height: 56px; margin-left: 32px; display: flex; flex-direction: column; align-items: center; }
.timer svg { width: 28px; height: 28px; margin-top: 5px; }
.timer em { width: 48px; height: 29px; margin-top: -5px; flex: none; border-radius: 8px; background: #232323; color: #fff; font-size: 20px; font-weight: 600; line-height: 29px; text-align: center; }
.ext-docs { width: 28px; height: 32px; margin-left: 33px; }
.ext-puzzle { width: 34px; height: 34px; margin-left: 44px; }
.bar { width: 4px; height: 32px; border-radius: 2px; background: #5c5c5c; }
.extensions .bar { margin-left: 33px; }
.ext-panel { width: 28px; height: 28px; margin-left: 38px; }
.avatar { width: 40px; height: 40px; margin-left: 38px; }
.dots { width: 8px; height: 28px; margin-left: 48px; }
.bookmarks { height: 68px; display: flex; align-items: center; padding-left: 24px; }
.bm { display: flex; align-items: center; gap: 12px; white-space: nowrap; flex: none; }
.bm svg { width: 32px; height: 32px; }
.w1 { width: 316px; } .w2 { width: 306px; } .w3 { width: 298px; } .w4 { width: 304px; }
.w5 { width: 312px; } .w6 { width: 296px; } .w7 { width: 306px; } .w8 { width: 390px; }
.bm.light svg { color: #bdc1c6; }
.bm.white svg { color: #fff; }
.more svg { width: 20px; height: 20px; }
.bookmarks .bar { margin: 0 32px 0 33px; }
.bm.all { gap: 15px; } .bm.all svg { width: 34px; height: 28px; }

/* sidebar */
.app { flex: 1; display: flex; min-height: 0; overflow: hidden; }
.sidebar { width: 144px; background: #3b3c61; display: flex; flex-direction: column; align-items: center; padding-top: 40px; flex: none; }
.logo { width: 40px; height: 40px; }
.s-life { margin-top: 369px; }
.s-life2 { margin-top: 80px; }
.s-award { width: 40px; height: 54px; margin-top: 80px; }
.s-copy { width: 38px; height: 48px; margin-top: 82px; }
.s-plus { width: 78px; height: 78px; margin-top: 420px; }
.s-power { width: 40px; height: 44px; margin-top: 64px; }

/* main column */
.main { width: 1642px; padding: 48px 137px 0 64px; flex: none; }
.top-row { display: flex; align-items: flex-start; height: 112px; }
.search { position: relative; width: 1153px; height: 112px; background: #3b3c61; border-radius: 4px; display: flex; align-items: center; padding: 0 40px 0 24px; flex: none; }
.lens { width: 32px; height: 32px; }
.query { margin-left: 23px; font-size: 32px; font-weight: 500; }
.caret { width: 2px; height: 45px; background: #fff; }
.clear { margin-left: auto; font-weight: 500; color: #5cc66a; }
.suggest { position: absolute; z-index: 2; left: 0; top: 112px; width: 1152px; height: 586px; padding-top: 19px; background: #26283e; border-radius: 0 0 4px 4px; box-shadow: 0 4px 12px rgba(0, 0, 0, .5); }
.suggest li { height: 102px; display: flex; align-items: center; padding-left: 46px; white-space: nowrap; }
.suggest svg { width: 18px; height: 30px; margin-right: 19px; }
.suggest b { font-weight: 400; font-size: 26px; margin-right: 7px; }
.suggest strong { font-weight: 500; }
.suggest small { font-size: 22px; margin-top: 3px; }
.suggest .powered { height: 36px; margin-top: 1px; justify-content: flex-end; padding-right: 22px; color: #14151f; }
.google { margin-left: 7px; font-size: 26px; }
.google i:nth-child(1), .google i:nth-child(4) { color: #4a82ee; }
.google i:nth-child(2), .google i:nth-child(6) { color: #d94c3d; }
.google i:nth-child(3) { color: #efb93b; }
.google i:nth-child(5) { color: #52a65c; }
.language { display: flex; align-items: center; margin: 50px 0 0 40px; height: 60px; font-size: 28px; font-weight: 500; }
.flag { width: 100px; height: 60px; margin-right: 15px; display: flex; flex-direction: column; background: #000; }
.flag i { flex: 1; }
.flag i:nth-child(2) { background: #cb2a1d; }
.flag i:nth-child(3) { background: #f9cf46; }
.forecast { margin-top: 167px; line-height: 36px; text-align: right; font-weight: 500; color: #a2a3bf; }
.weather { margin-top: 74px; height: 252px; }
.row { display: grid; grid-template-columns: 1125px 168px 133px 15px; font-weight: 500; }
.row span { display: flex; align-items: center; padding-left: 23px; }
.row span:nth-child(2) { justify-content: flex-end; padding-right: 58px; padding-left: 0; }
.head { height: 113px; background: #3b3c61; border-bottom: 1px solid #363b49; padding-bottom: 2px; }
.body { height: 139px; background: #212735; border-bottom: 2px solid #3c4252; }
.body span { border-right: 2px solid #3c4252; padding-bottom: 7px; }
.body span:nth-child(2) { padding-right: 56px; }
.body span:last-child { border: 0; }
.note { margin-top: 110px; line-height: 36px; font-weight: 500; white-space: nowrap; }

/* date range */
.range { width: 1138px; height: 800px; margin-top: 30px; border: 1px solid #cfd0d6; padding: 20px 10px 0; display: flex; }
.presets { width: 451px; }
.presets li { height: 78px; line-height: 76px; padding-left: 40px; border-bottom: 2px solid #3b3c61; font-weight: 500; }
.calendar { width: 665px; border-left: 1px solid #cfd0d6; }
.dates { height: 104px; background: #3b3c61; display: flex; gap: 20px; padding: 20px; }
.dates span { width: 302px; height: 64px; border-radius: 8px; background: #fff; color: #849095; font-weight: 500; line-height: 64px; text-align: center; }
.dates .on { line-height: 60px; border: 2px solid #4d8df6; }
.pager { height: 76px; margin-top: 32px; padding: 0 20px; display: flex; align-items: center; justify-content: space-between; }
.btn { width: 48px; height: 48px; border-radius: 9px; background: #eff1f7; display: flex; align-items: center; justify-content: center; }
.btn svg { width: 12px; height: 16px; }
.prev { padding-right: 3px; }
.next { padding-left: 3px; }
.selects { display: flex; gap: 20px; }
.select { height: 76px; border-radius: 8px; background: #fff; color: #26283e; font-weight: 500; display: flex; align-items: center; justify-content: space-between; }
.select svg { width: 18px; height: 12px; }
.month { width: 215px; padding: 0 16px 0 34px; }
.year { width: 141px; padding: 0 16px 0 21px; }
.month-name { margin: 53px 0 0 40px; line-height: 36px; font-weight: 500; }
.week, .days { display: grid; grid-template-columns: repeat(7, 89.100px); padding-left: 20px; text-align: center; }
.week { margin-top: 54px; line-height: 36px; }
.week b { font-weight: 500; }
.days { margin-top: 14px; justify-items: center; }
.days span { height: 72px; line-height: 72px; font-weight: 400; }
.days .today { width: 81px; height: 52px; margin-top: 9px; line-height: 53px; border-radius: 26px; font-weight: 600; background: linear-gradient(#fff, #fff) 50% 39px / 36px 4px no-repeat #5090f8; }

/* map column */
.side { width: 1094px; flex: none; overflow: hidden; }
.map { position: relative; height: 940px; overflow: hidden; font-family: Roboto, sans-serif; }
.tiles path { vector-effect: non-scaling-stroke; }
.casing, .fill { fill: none; stroke-linecap: round; stroke-linejoin: round; }
.casing { stroke: #d9dbe0; stroke-width: 8px; }
.fill { stroke: #fff; stroke-width: 5px; }
.fill.grey { stroke: #f1f2f4; }
.casing.big { stroke-width: 11.500px; }
.fill.big { stroke-width: 8px; }
.casing.faint { stroke: #e8e9ea; stroke-width: 7px; }
.fill.faint { stroke: #f3f4f5; stroke-width: 4px; }
.water { fill: none; stroke: #a5c1f4; stroke-width: 5px; }
.labels { font-size: 27px; fill: #5b7280; }
.labels text { paint-order: stroke; stroke: #fbfcfc; stroke-width: 5px; stroke-linejoin: round; }
.street { font-size: 20px; font-weight: 500; fill: #6f7378; }
.shield { font-size: 18px; font-weight: 700; fill: #f7da4d; }
.g-logo { font: 500 35px Poppins, Lato, sans-serif; }
.g-logo text { paint-order: stroke; stroke: #fff; stroke-width: 4px; }
.fullscreen { position: absolute; left: 994px; top: 20px; width: 80px; height: 80px; background: #fff; border-radius: 4px; box-shadow: 0 2px 8px rgba(0, 0, 0, .25); display: flex; align-items: center; justify-content: center; }
.fullscreen svg { width: 36px; height: 36px; }
.legal { position: absolute; right: 0; bottom: 0; width: 708px; height: 28px; padding-left: 10px; background: rgba(245, 245, 245, .7); color: #000; font-size: 20px; line-height: 30px; white-space: nowrap; display: flex; }
.k1 { width: 198px; } .k2 { width: 242px; } .k3 { width: 80px; }
.k1, .k2, .k3, .k4 { flex: none; }
.popup { position: absolute; left: 131px; top: 120px; width: 832px; height: 576px; border-radius: 16px; background: #fff; color: #000; box-shadow: 0 4px 14px 2px rgba(0, 0, 0, .3); padding: 40px 24px 0; font: 300 24px/32px Poppins, Inter, sans-serif; white-space: nowrap; }
.popup::after { content: ""; position: absolute; left: 392px; top: 576px; width: 48px; height: 22px; background: #fff; clip-path: polygon(0 0, 100% 0, 50% 100%); }
.popup h4 { font-size: 24px; font-weight: 500; line-height: 32px; }
.popup .u { text-decoration: underline; text-decoration-thickness: 2px; text-underline-offset: 3px; }
.loc-d { margin-top: 16px; }
.coords { margin-top: 16px; }
.country { margin-top: 24px; }
.popup .weather-i { margin-top: 24px; }
.summary { margin-top: 16px; }
.close { position: absolute; right: 10px; top: 10px; width: 16px; height: 16px; }

/* countries table */
.countries { margin-top: 87px; width: 1500px; font-weight: 500; }
.c-head { height: 144px; background: #3b3c61; display: grid; grid-template-columns: 145px 137px 137px 159px 168px 131px 107px 130px; align-items: center; padding-left: 24px; line-height: 32px; }
.c-head span:nth-child(3), .c-head span:nth-child(6) { padding-right: 40px; }
.c-empty { height: 124px; background: #212735; line-height: 124px; padding-left: 818px; font-size: 28px; }
```
